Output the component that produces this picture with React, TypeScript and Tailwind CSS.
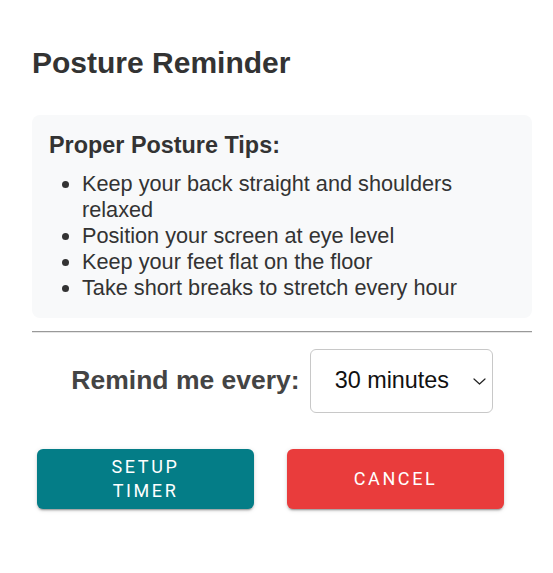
import React from "react";

export default function App() {
  return (
    <div className="min-h-screen bg-white font-['Liberation_Sans',Arial,sans-serif]">
      <div className="ml-[32px] w-[500px] pt-[45px]">
        <h2 className="text-[30px] font-bold leading-[36px] text-[#333]">Posture Reminder</h2>

        <div className="mt-[34px] rounded-lg bg-[#f8f9fa] pl-[17px] pr-[50px] pt-[16px] pb-[17px]">
          <h3 className="text-[23.4px] font-bold leading-[28px] text-[#333]">Proper Posture Tips:</h3>
          <ul className="mt-[12px] list-disc pl-[33px] text-[21.7px] leading-[26px] text-[#333]">
            <li>Keep your back straight and shoulders relaxed</li>
            <li>Position your screen at eye level</li>
            <li>Keep your feet flat on the floor</li>
            <li className="whitespace-nowrap">Take short breaks to stretch every hour</li>
          </ul>
        </div>

        <div className="mt-[13px] border-t border-b border-t-[#999] border-b-[#e6e6e6]" />

        <div className="mt-[16px] flex items-center justify-center gap-[10px]">
          <label className="text-[26.5px] font-bold text-[#444]">Remind me every:</label>
          <div className="relative h-[64px] w-[183px]">
            <select
              defaultValue="30"
              className="h-full w-full appearance-none rounded-[6px] border border-[#c8c8c8] bg-white pl-[24px] text-[23.4px] text-[#111] outline-none"
            >
              <option value="15">15 minutes</option>
              <option value="30">30 minutes</option>
              <option value="45">45 minutes</option>
              <option value="60">60 minutes</option>
            </select>
            <svg
              className="pointer-events-none absolute right-[7px] top-[29px]"
              width="13"
              height="7"
              viewBox="0 0 13 7"
              fill="none"
            >
              <path d="M1 1l5.5 5L12 1" stroke="#222" strokeWidth="1.2" strokeLinecap="round" strokeLinejoin="round" />
            </svg>
          </div>
        </div>

        <div className="mt-[36px] flex gap-[33px] pl-[5px] font-['Roboto',sans-serif]">
          <button className="flex h-[60px] w-[217px] items-center justify-center rounded-[6px] bg-[#047d87] text-[18px] font-normal leading-[24px] tracking-[2.6px] text-white shadow-[0_3px_1px_-2px_rgba(0,0,0,0.2),0_2px_2px_0_rgba(0,0,0,0.14),0_1px_5px_0_rgba(0,0,0,0.12)]">
            <span>
              SETUP
              <br />
              TIMER
            </span>
          </button>
          <button className="flex h-[60px] w-[217px] items-center justify-center rounded-[6px] bg-[#e93c3c] text-[18px] font-normal leading-[24px] tracking-[2.6px] text-white shadow-[0_3px_1px_-2px_rgba(0,0,0,0.2),0_2px_2px_0_rgba(0,0,0,0.14),0_1px_5px_0_rgba(0,0,0,0.12)]">
            CANCEL
          </button>
        </div>
      </div>
    </div>
  );
}
